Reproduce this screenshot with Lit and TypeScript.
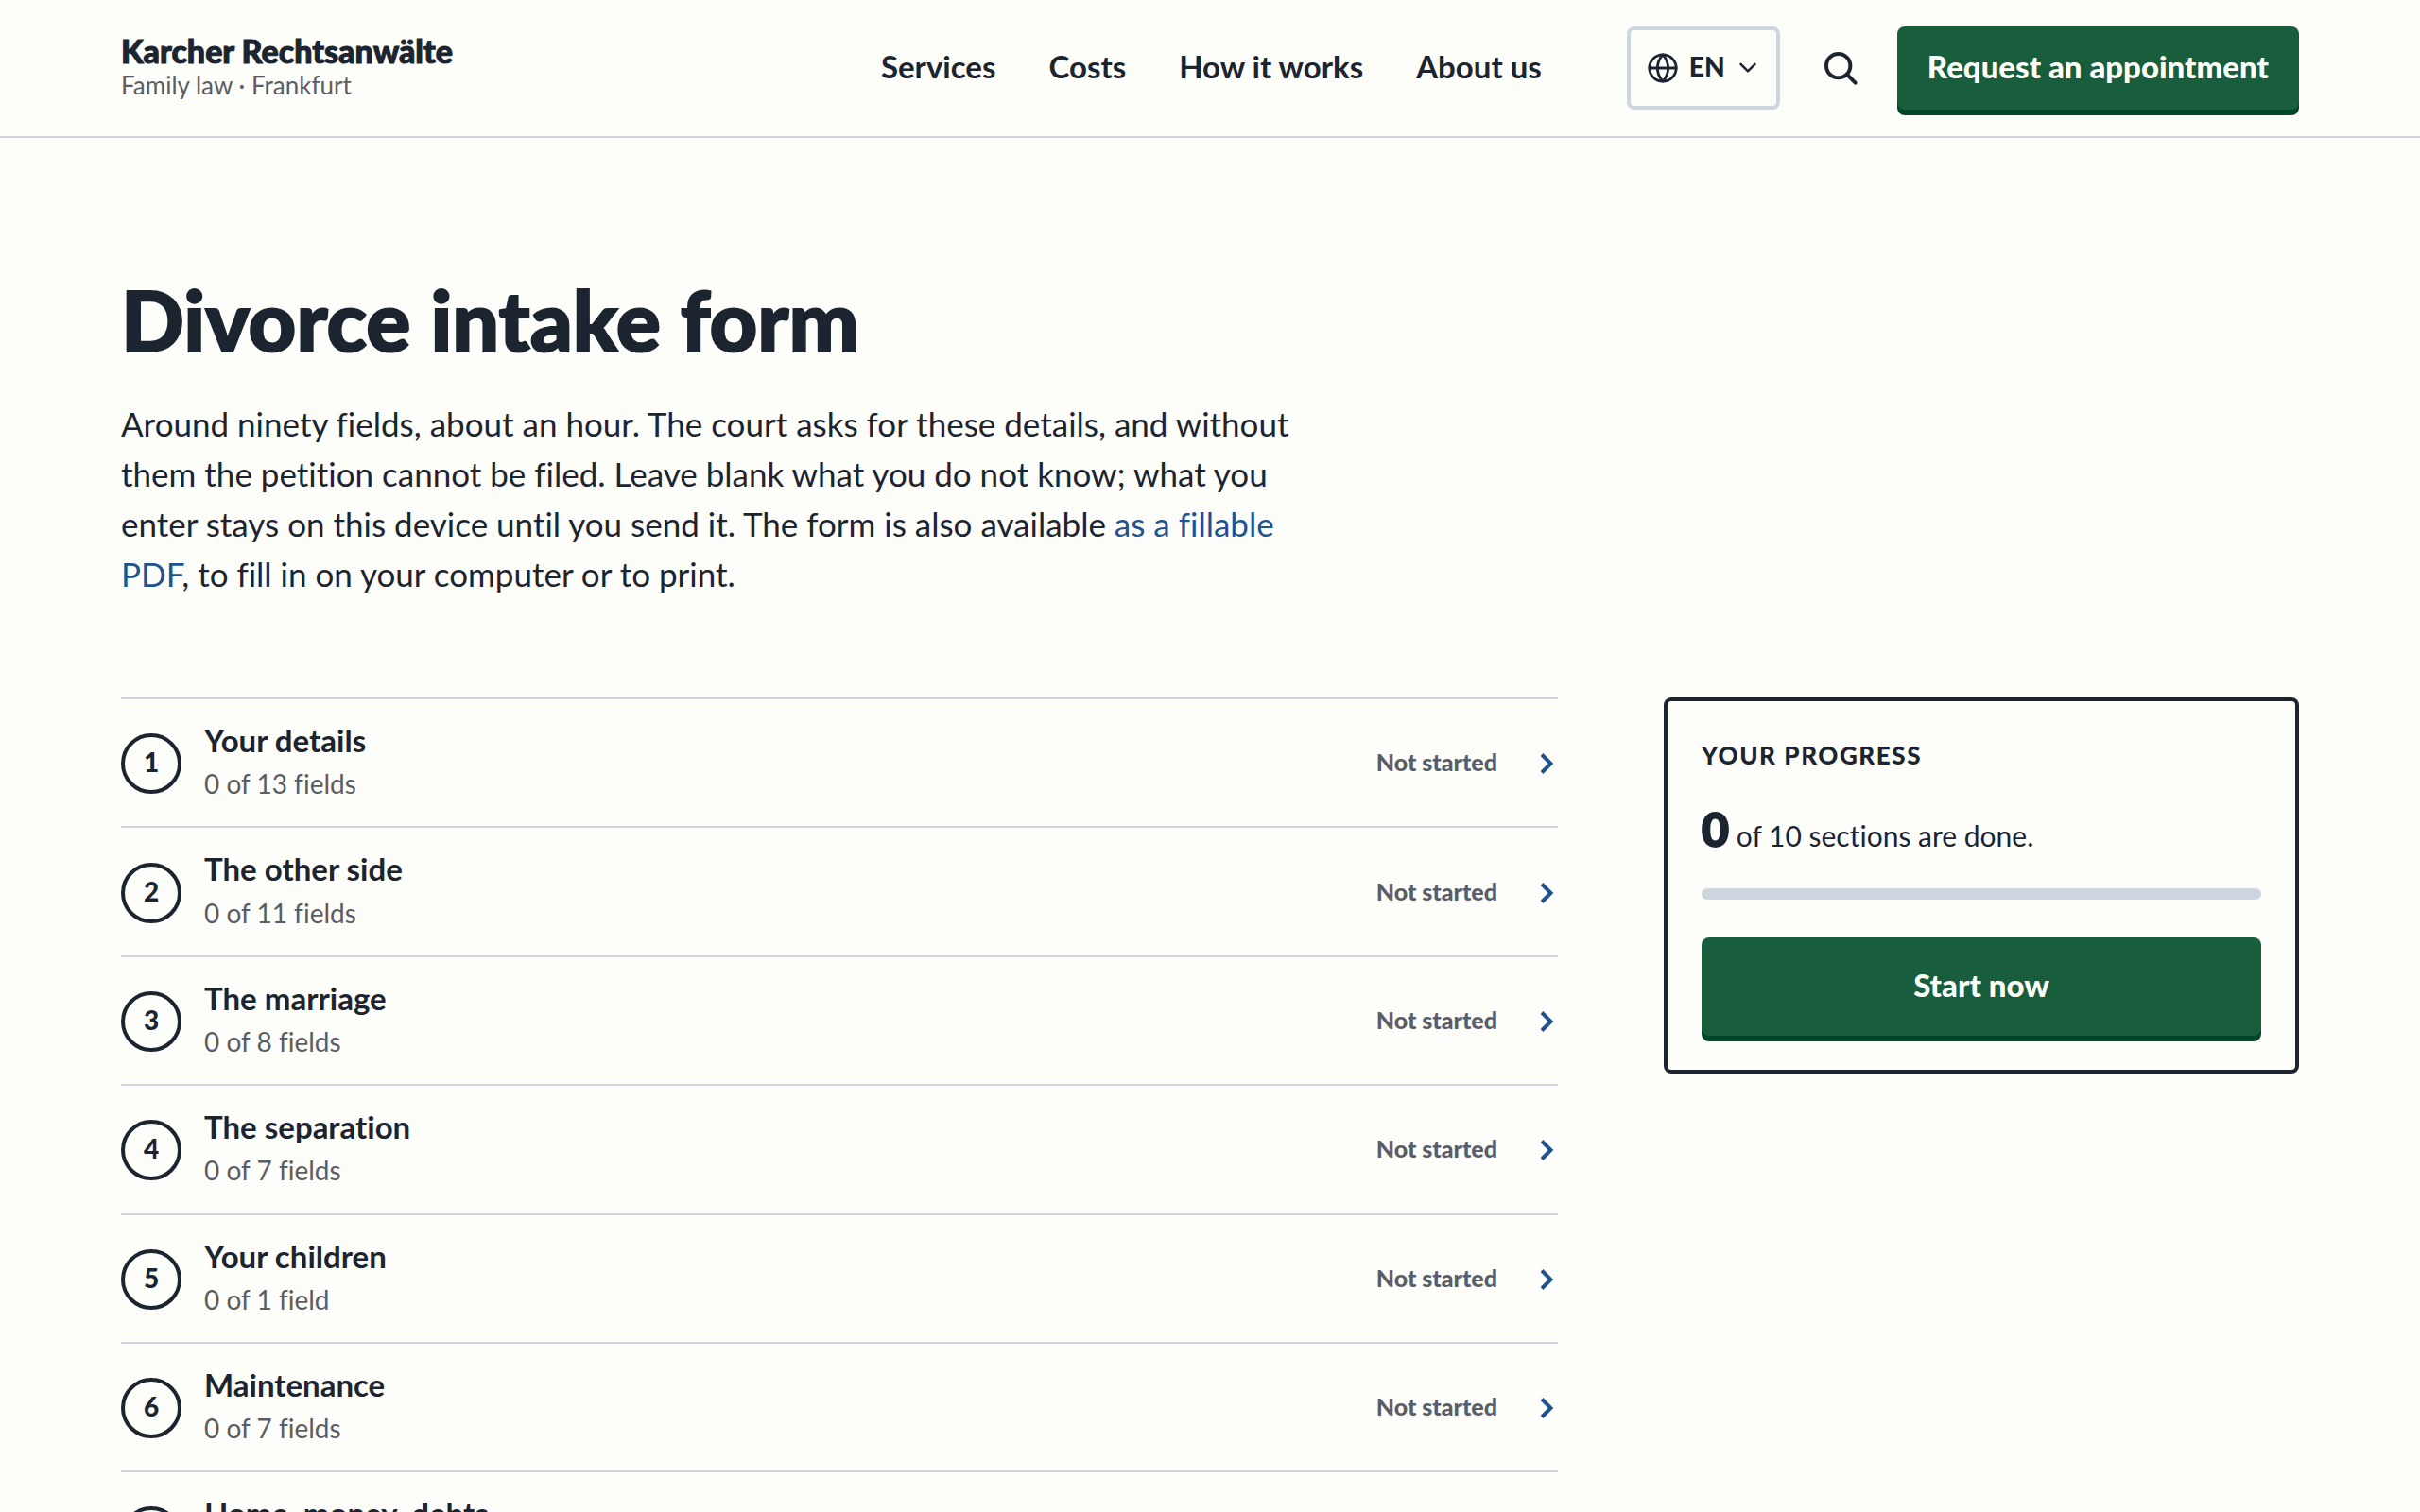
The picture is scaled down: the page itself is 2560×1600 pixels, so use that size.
import { LitElement, css, html, svg } from "lit";
import { customElement, property, state } from "lit/decorators.js";

interface Section {
  title: string;
  filled: number;
  fields: number;
}

const SECTIONS: Section[] = [
  { title: "Your details", filled: 0, fields: 13 },
  { title: "The other side", filled: 0, fields: 11 },
  { title: "The marriage", filled: 0, fields: 8 },
  { title: "The separation", filled: 0, fields: 7 },
  { title: "Your children", filled: 0, fields: 1 },
  { title: "Maintenance", filled: 0, fields: 7 },
  { title: "Home, money, debts", filled: 0, fields: 14 },
];

const NAV = ["Services", "Costs", "How it works", "About us"];

const globe = svg`<circle cx="12" cy="12" r="10"/><path d="M2 12h20"/><path d="M12 2a15.3 15.3 0 0 1 4 10 15.3 15.3 0 0 1-4 10 15.3 15.3 0 0 1-4-10 15.3 15.3 0 0 1 4-10z"/>`;

@customElement("site-header")
export class SiteHeader extends LitElement {
  static styles = css`
    :host {
      display: block;
      border-bottom: 2px solid var(--line-soft);
    }
    .bar {
      display: flex;
      align-items: center;
      min-height: 144px;
      padding: 0 5vw;
      box-sizing: border-box;
    }
    .brand {
      display: flex;
      flex-direction: column;
      margin-right: auto;
      color: var(--ink);
      text-decoration: none;
    }
    .name {
      font-size: 34px;
      line-height: 36px;
      font-weight: 900;
      -webkit-text-stroke: 1px currentColor;
    }
    .field {
      font-size: 26px;
      line-height: 36px;
      color: var(--muted);
    }
    .nav {
      display: flex;
      gap: 56px;
      margin-right: 90px;
      padding-bottom: 4px;
    }
    .link {
      color: var(--ink);
      font-size: 33px;
      line-height: 48px;
      font-weight: 700;
      text-decoration: none;
    }
    .lang {
      display: grid;
      align-items: center;
    }
    .lang > * {
      grid-area: 1 / 1;
    }
    .select {
      appearance: none;
      height: 88px;
      width: 162px;
      margin: 0;
      padding: 0 52px 4px 62px;
      border: 4px solid var(--line);
      border-radius: 8px;
      background: transparent;
      color: var(--ink);
      font: 900 28px/36px var(--font);
      cursor: pointer;
    }
    .icon {
      fill: none;
      stroke: currentColor;
      stroke-linecap: round;
      stroke-linejoin: round;
      pointer-events: none;
    }
    .globe {
      width: 34px;
      height: 34px;
      margin-left: 21px;
      stroke-width: 2;
    }
    .caret {
      width: 20px;
      height: 20px;
      margin-right: 24px;
      justify-self: end;
      stroke-width: 3;
    }
    .search {
      display: grid;
      place-items: center;
      width: 88px;
      height: 88px;
      margin: 0 16px 0 20px;
      padding: 0;
      border: 0;
      background: none;
      color: var(--ink);
      cursor: pointer;
    }
    .glass {
      width: 40px;
      height: 40px;
      stroke-width: 2.4;
    }
    .cta {
      display: flex;
      align-items: center;
      box-sizing: border-box;
      height: 88px;
      padding: 0 32px 4px;
      border-radius: 8px;
      background: var(--green);
      box-shadow: 0 6px 0 var(--green-deep);
      color: var(--paper);
      font-size: 33px;
      font-weight: 900;
      text-decoration: none;
      white-space: nowrap;
    }
  `;

  render() {
    return html`
      <header class="bar">
        <a class="brand" href="#home">
          <span class="name">Karcher Rechtsanwälte</span>
          <span class="field">Family law · Frankfurt</span>
        </a>
        <nav class="nav">
          ${NAV.map((item) => html`<a class="link" href="#">${item}</a>`)}
        </nav>
        <div class="lang">
          <select class="select" aria-label="Language">
            <option>EN</option>
            <option>DE</option>
          </select>
          <svg class="icon globe" viewBox="0 0 24 24" aria-hidden="true">${globe}</svg>
          <svg class="icon caret" viewBox="0 0 24 24" aria-hidden="true"><path d="M3 7l9 9 9-9" /></svg>
        </div>
        <button class="search" type="button" aria-label="Search">
          <svg class="icon glass" viewBox="0 0 24 24" aria-hidden="true">
            <circle cx="10.6" cy="10.6" r="7.6" /><path d="M21.4 21.4l-5.2-5.2" />
          </svg>
        </button>
        <a class="cta" href="#appointment">Request an appointment</a>
      </header>
    `;
  }
}

@customElement("section-row")
export class SectionRow extends LitElement {
  @property({ type: Number }) number = 1;
  @property({ attribute: false }) section!: Section;

  static styles = css`
    :host {
      display: block;
      border-bottom: 2px solid var(--line-soft);
    }
    .row {
      display: flex;
      align-items: center;
      gap: 24px;
      padding: 20px 0 18px;
      color: var(--ink);
      text-decoration: none;
    }
    .badge {
      display: grid;
      place-items: center;
      box-sizing: border-box;
      width: 64px;
      height: 64px;
      padding-bottom: 4px;
      border: 4px solid var(--ink);
      border-radius: 50%;
      font-size: 28px;
      line-height: 36px;
      font-weight: 900;
    }
    .text {
      display: flex;
      flex: 1;
      flex-direction: column;
      padding-bottom: 4px;
    }
    .title {
      font-size: 33px;
      line-height: 1.4;
      font-weight: 700;
    }
    .count {
      font-size: 28px;
      line-height: 1.65;
      color: var(--muted);
    }
    .status {
      padding-bottom: 4px;
      font-size: 25px;
      font-weight: 900;
      color: var(--muted);
    }
    .chevron {
      width: 24px;
      height: 24px;
      margin-left: 16px;
      fill: none;
      stroke: var(--blue);
      stroke-width: 4;
    }
  `;

  render() {
    const { title, filled, fields } = this.section;
    return html`
      <a class="row" href="#section-${this.number}">
        <span class="badge">${this.number}</span>
        <span class="text">
          <span class="title">${title}</span>
          <span class="count">${filled} of ${fields} ${fields === 1 ? "field" : "fields"}</span>
        </span>
        <span class="status">Not started</span>
        <svg class="chevron" viewBox="0 0 24 24" aria-hidden="true"><path d="M7 2.5l9.5 9.5L7 21.5" /></svg>
      </a>
    `;
  }
}

@customElement("progress-card")
export class ProgressCard extends LitElement {
  @property({ type: Number }) done = 0;
  @property({ type: Number }) total = 10;

  static styles = css`
    :host {
      display: block;
    }
    .card {
      padding: 36px;
      border: 4px solid var(--ink);
      border-radius: 8px;
    }
    .label {
      margin: 0;
      font-size: 26px;
      line-height: 42px;
      font-weight: 900;
      letter-spacing: 0.06em;
      text-transform: uppercase;
    }
    .summary {
      margin: 26px 0 18px;
      font-size: 30px;
      line-height: 76px;
    }
    .figure {
      font-size: 50px;
      line-height: 50px;
      font-weight: 900;
      -webkit-text-stroke: 2px currentColor;
    }
    .track {
      height: 12px;
      overflow: hidden;
      border-radius: 6px;
      background: var(--line);
    }
    .fill {
      height: 100%;
      background: var(--green);
    }
    .start {
      display: block;
      width: 100%;
      height: 104px;
      margin-top: 40px;
      padding: 0 0 4px;
      border: 0;
      border-radius: 8px;
      background: var(--green);
      box-shadow: 0 6px 0 var(--green-deep);
      color: var(--paper);
      font: 900 33px/48px var(--font);
      cursor: pointer;
    }
  `;

  render() {
    return html`
      <section class="card">
        <h2 class="label">Your progress</h2>
        <p class="summary"><strong class="figure">${this.done}</strong> of ${this.total} sections are done.</p>
        <div class="track"><div class="fill" style="width: ${(this.done / this.total) * 100}%"></div></div>
        <button class="start" type="button">Start now</button>
      </section>
    `;
  }
}

@customElement("app-root")
export class AppRoot extends LitElement {
  @state() private sections = SECTIONS;

  static styles = css`
    :host {
      --font: Lato, "Open Sans", sans-serif;
      --ink: #1c2430;
      --muted: #5a5d66;
      --paper: #fdfdf9;
      --line: #cdd6df;
      --line-soft: #d0d5e1;
      --green: #185e3d;
      --green-deep: #004629;
      --blue: #1f5390;
      display: block;
      min-height: 100vh;
      background: var(--paper);
      color: var(--ink);
      font-family: var(--font);
      font-variant-ligatures: none;
    }
    .page {
      padding: 144px 5vw 0;
    }
    .heading {
      margin: 0;
      font-size: 88px;
      line-height: 96px;
      font-weight: 900;
      -webkit-text-stroke: 2px currentColor;
    }
    .lead {
      max-width: 1248px;
      margin: 36px 0 0;
      font-size: 35px;
      line-height: 53px;
    }
    .pdf {
      color: var(--blue);
      text-decoration: none;
    }
    .columns {
      display: grid;
      grid-template-columns: minmax(0, 1fr) 672px;
      gap: 112px;
      align-items: start;
      margin-top: 104px;
    }
    .list {
      margin: 0;
      padding: 0;
      border-top: 2px solid var(--line-soft);
      list-style: none;
    }
  `;

  render() {
    return html`
      <site-header></site-header>
      <main class="page">
        <h1 class="heading">Divorce intake form</h1>
        <p class="lead">
          Around ninety fields, about an hour. The court asks for these details, and without them the petition cannot
          be filed. Leave blank what you do not know; what you enter stays on this device until you send it. The form
          is also available <a class="pdf" href="#pdf">as a fillable PDF</a>, to fill in on your computer or to print.
        </p>
        <div class="columns">
          <ol class="list">
            ${this.sections.map(
              (section, i) => html`<li><section-row .number=${i + 1} .section=${section}></section-row></li>`,
            )}
          </ol>
          <progress-card></progress-card>
        </div>
      </main>
    `;
  }
}
